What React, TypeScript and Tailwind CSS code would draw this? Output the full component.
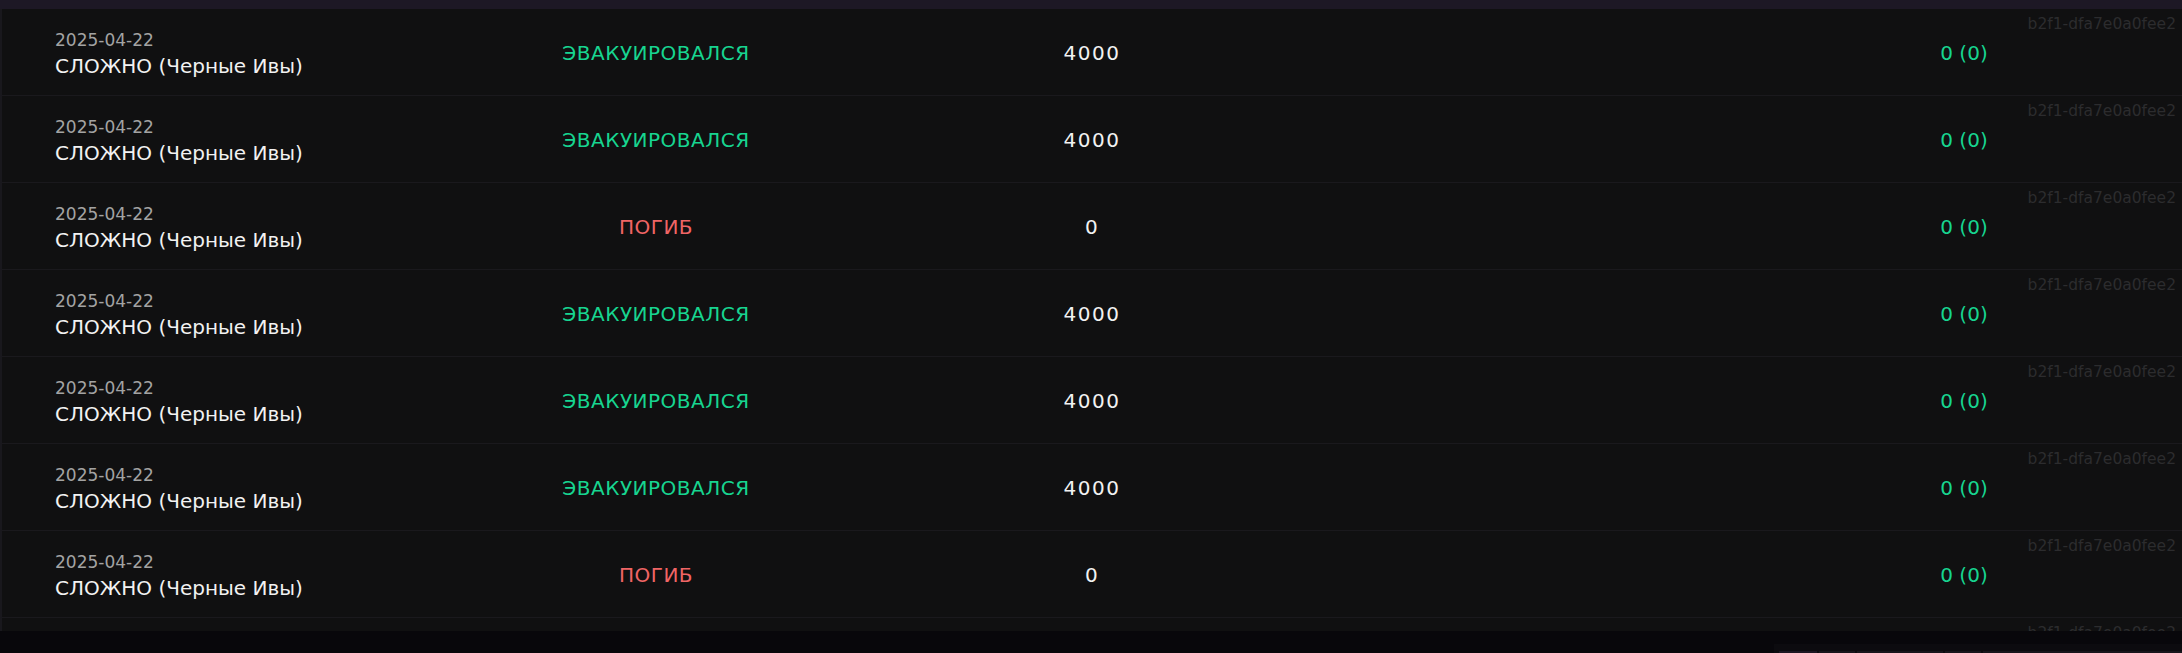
import React from "react";

type Row = { ok: boolean; amount: string };

const rows: Row[] = [
  { ok: true, amount: "4000" },
  { ok: true, amount: "4000" },
  { ok: false, amount: "0" },
  { ok: true, amount: "4000" },
  { ok: true, amount: "4000" },
  { ok: true, amount: "4000" },
  { ok: false, amount: "0" },
];

const font = { fontFamily: '"DejaVu Sans", "Noto Sans", sans-serif' };

function Hash() {
  return (
    <span className="absolute right-[6px] top-[6px] text-[15.5px] leading-[18px] text-[#2c2c2e]">
      b2f1-dfa7e0a0fee2
    </span>
  );
}

export default function App() {
  return (
    <div className="w-[2182px] h-[653px] bg-[#08070b] overflow-hidden flex flex-col" style={font}>
      <div className="h-[9px] bg-[#1d1825] shrink-0" />
      <div className="h-[622px] shrink-0 overflow-hidden bg-[#101011] border-l-2 border-[#19181d]">
        {rows.map((r, i) => (
          <div
            key={i}
            className="relative h-[87px] shrink-0 border-b border-[#1a191d] grid grid-cols-5 items-center"
          >
            <div className="self-stretch pl-[53px] pt-[21px] flex flex-col">
              <span className="text-[17px] leading-[20px] text-[#a3a3a3]">2025-04-22</span>
              <span className="mt-[4px] text-[20px] leading-[24px] text-[#f2f2f2]">СЛОЖНО (Черные Ивы)</span>
            </div>
            <div className="pt-[2px] text-center text-[20px] leading-[24px] tracking-[0.5px]">
              {r.ok ? (
                <span className="text-[#17d590]">ЭВАКУИРОВАЛСЯ</span>
              ) : (
                <span className="text-[#f06565]">ПОГИБ</span>
              )}
            </div>
            <div className="pt-[2px] text-center text-[20px] leading-[24px] tracking-[1.5px] text-[#f2f2f2]">
              {r.amount}
            </div>
            <div />
            <div className="pt-[2px] text-center text-[20px] leading-[24px] text-[#17d590]">0 (0)</div>
            <Hash />
          </div>
        ))}
        <div className="relative h-[87px]">
          <Hash />
        </div>
      </div>
      <div className="flex-1 flex justify-end items-end">
        <div className="w-[408px] h-[9px] bg-[#0c0b0f] flex items-end gap-[2px] pl-[5px]">
          <div className="w-[38px] h-[2px] bg-[#1c1622]" />
          <div className="w-[36px] h-[2px] bg-[#17151b]" />
          <div className="w-[86px] h-[2px] bg-[#17151b]" />
          <div className="w-[36px] h-[2px] bg-[#17151b]" />
          <div className="flex-1 h-[2px] bg-[#17151b]" />
        </div>
      </div>
    </div>
  );
}
